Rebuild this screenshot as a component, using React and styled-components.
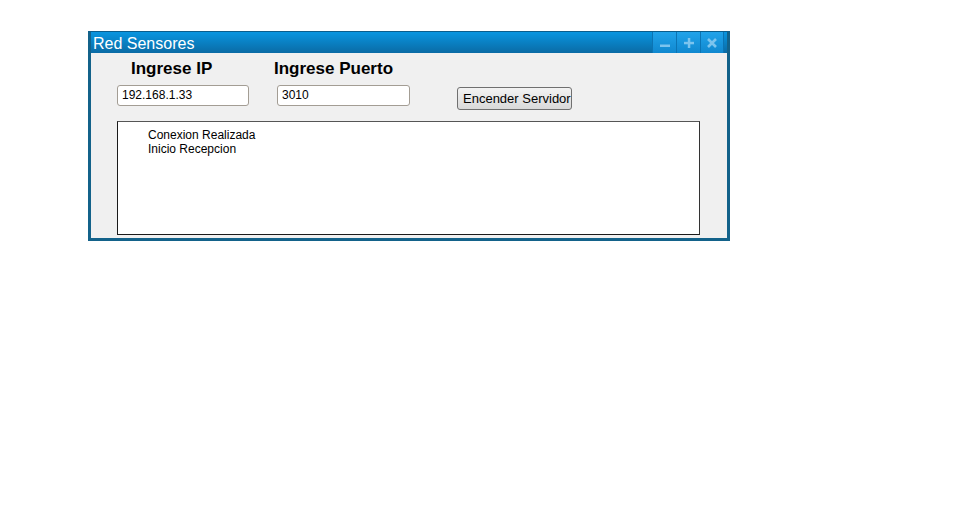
import React from "react";
import styled, { createGlobalStyle } from "styled-components";

const Global = createGlobalStyle`
  html, body { margin: 0; padding: 0; background: #ffffff; }
  body { font-family: "Liberation Sans", Arial, sans-serif; }
`;

const Page = styled.div`
  padding: 31px 0 0 88px;
`;

const Window = styled.div`
  width: 642px;
  box-sizing: border-box;
  border: 3px solid #13628a;
  border-top: 1px solid #0b5d8c;
  background: #13628a;
  display: flex;
  flex-direction: column;
`;

const TitleBar = styled.div`
  height: 21px;
  margin: 0 -3px;
  padding-left: 5px;
  display: flex;
  align-items: center;
  background: linear-gradient(#0995e0, #0a6ba5);
  box-shadow: inset 3px 0 0 #13628a, inset -3px 0 0 #13628a;
`;

const Title = styled.span`
  flex: 1;
  color: #ffffff;
  font-size: 16px;
  line-height: 21px;
  margin-top: 1px;
`;

const Controls = styled.div`
  display: flex;
  height: 21px;
  margin-right: 6px;
`;

const CtrlButton = styled.div`
  width: 24px;
  height: 21px;
  box-sizing: border-box;
  border-left: 1px solid #0b74b4;
  background: linear-gradient(#21a3ea, #1088cf);
  display: flex;
  align-items: center;
  justify-content: center;
  &:last-child { border-right: 1px solid #0b74b4; }
`;

const Content = styled.div`
  background: #f0f0f0;
  height: 185px;
  box-sizing: border-box;
  padding: 6px 0 0 26px;
  display: flex;
  flex-direction: column;
`;

const FormRow = styled.div`
  display: flex;
  align-items: flex-start;
`;

const Field = styled.div`
  display: flex;
  flex-direction: column;
  margin-right: ${(p) => p.$gap}px;
`;

const Label = styled.div`
  font-weight: bold;
  font-size: 17px;
  line-height: 20px;
  color: #000;
  margin-left: ${(p) => p.$indent}px;
  white-space: nowrap;
`;

const Input = styled.div`
  margin-top: 6px;
  margin-left: ${(p) => p.$indent}px;
  width: ${(p) => p.$w}px;
  height: 21px;
  box-sizing: border-box;
  border: 1px solid #a39d94;
  border-radius: 3px;
  background: #ffffff;
  font-size: 12px;
  line-height: 19px;
  padding-left: 4px;
  color: #000;
`;

const Button = styled.div`
  margin-top: 28px;
  width: 115px;
  height: 23px;
  box-sizing: border-box;
  border: 1px solid #707070;
  border-radius: 3px;
  background: linear-gradient(#f3f3f3, #e6e6e6 50%, #d9d9d9);
  font-size: 13px;
  line-height: 21px;
  padding-left: 5px;
  white-space: nowrap;
  overflow: hidden;
  color: #000;
`;

const LogBox = styled.div`
  margin-top: 11px;
  width: 583px;
  height: 114px;
  box-sizing: border-box;
  border: 1px solid #1a1a1a;
  border-top-color: #555;
  border-right-color: #333;
  background: #ffffff;
  padding: 6px 0 0 30px;
  font-size: 12px;
  line-height: 14px;
  color: #000;
`;

const ICON = "#7cc4ee";

const Minus = () => (
  <svg width="10" height="10" viewBox="0 0 10 10">
    <rect x="0" y="6.5" width="10" height="2.5" fill={ICON} />
  </svg>
);
const Plus = () => (
  <svg width="10" height="10" viewBox="0 0 10 10">
    <rect x="0" y="3.8" width="10" height="2.5" fill={ICON} />
    <rect x="3.8" y="0" width="2.5" height="10" fill={ICON} />
  </svg>
);
const Close = () => (
  <svg width="10" height="10" viewBox="0 0 10 10">
    <path d="M1 1 L9 9 M9 1 L1 9" stroke={ICON} strokeWidth="2.6" />
  </svg>
);

export default function App() {
  return (
    <>
      <Global />
      <Page>
        <Window>
          <TitleBar>
            <Title>Red Sensores</Title>
            <Controls>
              <CtrlButton><Minus /></CtrlButton>
              <CtrlButton><Plus /></CtrlButton>
              <CtrlButton><Close /></CtrlButton>
            </Controls>
          </TitleBar>
          <Content>
            <FormRow>
              <Field $gap={25}>
                <Label $indent={14}>Ingrese IP</Label>
                <Input $indent={0} $w={132}>192.168.1.33</Input>
              </Field>
              <Field $gap={47}>
                <Label $indent={0}>Ingrese Puerto</Label>
                <Input $indent={3} $w={133}>3010</Input>
              </Field>
              <Button>Encender Servidor</Button>
            </FormRow>
            <LogBox>
              Conexion Realizada
              <br />
              Inicio Recepcion
            </LogBox>
          </Content>
        </Window>
      </Page>
    </>
  );
}
